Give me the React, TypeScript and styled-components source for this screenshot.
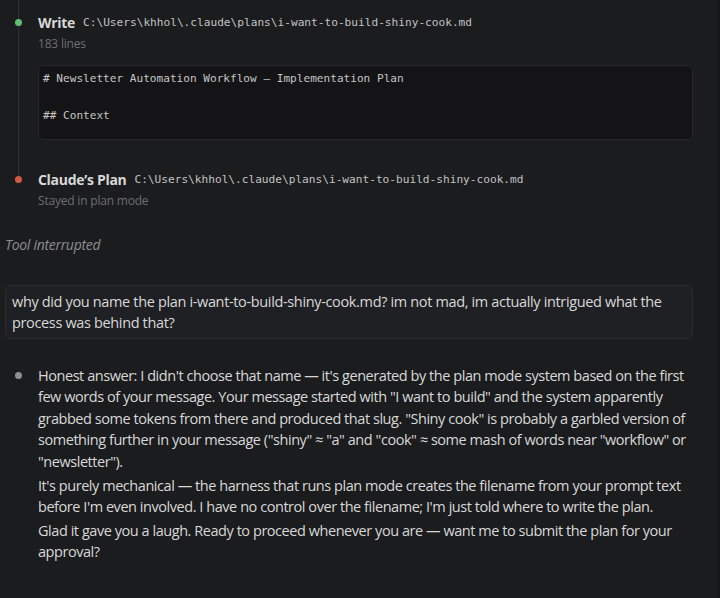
import React from "react";
import styled, { createGlobalStyle } from "styled-components";

const Global = createGlobalStyle`
  html, body { margin: 0; padding: 0; background: #1b1c1e; }
  body { width: 720px; height: 598px; overflow: hidden; }
  #root { height: 598px; }
`;

const sans = `"Open Sans", "Noto Sans", sans-serif`;
const mono = `"DejaVu Sans Mono", "Liberation Mono", monospace`;

const Page = styled.div`
  box-sizing: border-box;
  width: 720px;
  height: 598px;
  background: #1b1c1e;
  border-right: 2px solid #161719;
  font-family: ${sans};
  color: #d2d2d2;
  padding-left: 5px;
  padding-right: 25px;
  overflow: hidden;
`;

const Timeline = styled.div`
  position: relative;
  padding-top: 11px;
`;

const Rail = styled.div`
  position: absolute;
  left: 13px;
  top: 0;
  height: 178px;
  width: 1px;
  background: #303135;
`;

const Step = styled.div<{ $gap?: number }>`
  position: relative;
  padding-left: 33px;
  margin-bottom: ${(p) => p.$gap ?? 0}px;
`;

const Dot = styled.span<{ $color: string; $top: number }>`
  position: absolute;
  left: 10px;
  top: ${(p) => p.$top}px;
  width: 7px;
  height: 7px;
  border-radius: 50%;
  background: ${(p) => p.$color};
`;

const Head = styled.div`
  display: flex;
  align-items: center;
  gap: 8px;
  height: 22px;
`;

const Title = styled.span`
  font-size: 14px;
  font-weight: 700;
  color: #d8d8d8;
  letter-spacing: -0.3px;
`;

const Path = styled.span`
  font-family: ${mono};
  font-size: 11.15px;
  color: #c2c2c2;
  padding-top: 1px;
`;

const Meta = styled.div`
  font-size: 12px;
  color: #6d6e72;
  line-height: 22px;
  letter-spacing: -0.2px;
`;

const CodeBlock = styled.div`
  margin-top: 10px;
  box-sizing: border-box;
  height: 75px;
  overflow: hidden;
  background: #141416;
  border: 1px solid #27282b;
  border-radius: 5px;
  padding: 4px 4px;
  font-family: ${mono};
  font-size: 11.1px;
  line-height: 18.5px;
  color: #c4c4c4;
  white-space: pre;
`;

const Interrupted = styled.div`
  margin-top: 23px;
  font-style: italic;
  font-size: 14px;
  color: #8c8d90;
  letter-spacing: -0.3px;
  line-height: 20px;
`;

const UserBox = styled.div`
  margin-top: 30px;
  box-sizing: border-box;
  background: #1f2023;
  border: 1px solid #2b2c30;
  border-radius: 6px;
  padding: 5px 6px 5px;
  font-size: 14.5px;
  line-height: 21px;
  color: #d8d8d8;
  letter-spacing: -0.35px;
`;

const Answer = styled.div`
  position: relative;
  margin-top: 26px;
  padding-left: 33px;
`;

const Para = styled.p`
  margin: 0 0 2.5px;
  font-size: 14.5px;
  line-height: 21.4px;
  color: #d8d8d8;
  letter-spacing: -0.45px;
`;

export default function App() {
  return (
    <>
      <Global />
      <Page>
        <Timeline>
          <Rail />
          <Step $gap={28}>
            <Dot $color="#5fbf73" $top={8} />
            <Head>
              <Title>Write</Title>
              <Path>C:\Users\khhol\.claude\plans\i-want-to-build-shiny-cook.md</Path>
            </Head>
            <Meta>183 lines</Meta>
            <CodeBlock>
              {"# Newsletter Automation Workflow — Implementation Plan\n\n## Context"}
            </CodeBlock>
          </Step>
          <Step>
            <Dot $color="#d05a43" $top={8} />
            <Head>
              <Title>Claude’s Plan</Title>
              <Path>C:\Users\khhol\.claude\plans\i-want-to-build-shiny-cook.md</Path>
            </Head>
            <Meta>Stayed in plan mode</Meta>
          </Step>
        </Timeline>
        <Interrupted>Tool interrupted</Interrupted>
        <UserBox>
          why did you name the plan i-want-to-build-shiny-cook.md? im not mad, im actually intrigued what the
          process was behind that?
        </UserBox>
        <Answer>
          <Dot $color="#8e8f92" $top={7} />
          <Para>
            Honest answer: I didn't choose that name — it's generated by the plan mode system based on the first
            few words of your message. Your message started with "I want to build" and the system apparently
            grabbed some tokens from there and produced that slug. "Shiny cook" is probably a garbled version of
            something further in your message ("shiny" ≈ "a" and "cook" ≈ some mash of words near "workflow" or
            "newsletter").
          </Para>
          <Para>
            It's purely mechanical — the harness that runs plan mode creates the filename from your prompt text
            before I'm even involved. I have no control over the filename; I'm just told where to write the plan.
          </Para>
          <Para>
            Glad it gave you a laugh. Ready to proceed whenever you are — want me to submit the plan for your
            approval?
          </Para>
        </Answer>
      </Page>
    </>
  );
}
